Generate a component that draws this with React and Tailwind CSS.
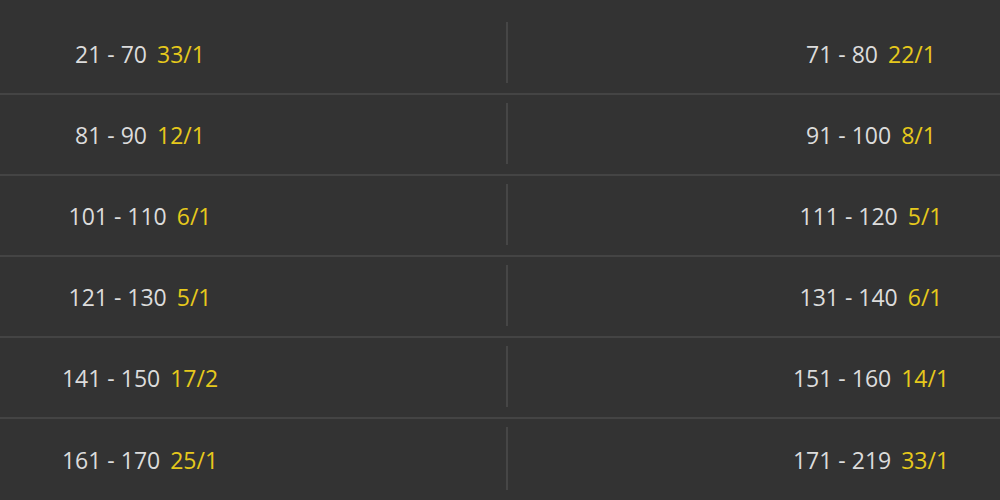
import React from 'react';

const rows = [
  [{ range: '21 - 70', odds: '33/1' }, { range: '71 - 80', odds: '22/1' }],
  [{ range: '81 - 90', odds: '12/1' }, { range: '91 - 100', odds: '8/1' }],
  [{ range: '101 - 110', odds: '6/1' }, { range: '111 - 120', odds: '5/1' }],
  [{ range: '121 - 130', odds: '5/1' }, { range: '131 - 140', odds: '6/1' }],
  [{ range: '141 - 150', odds: '17/2' }, { range: '151 - 160', odds: '14/1' }],
  [{ range: '161 - 170', odds: '25/1' }, { range: '171 - 219', odds: '33/1' }],
];

const Cell = ({ range, odds, className }) => (
  <div className={`flex items-center justify-center gap-[10px] pt-[2px] ${className}`}>
    <span className="text-[#dcdcdc]">{range}</span>
    <span className="text-[#e6c91c]">{odds}</span>
  </div>
);

export default function App() {
  return (
    <div
      className="w-[1000px] h-[500px] overflow-hidden bg-[#333333] pt-[14px] text-[23px] leading-none"
      style={{ fontFamily: '"Open Sans", "Liberation Sans", sans-serif' }}
    >
      {rows.map((row, i) => (
        <div
          key={i}
          className={`flex h-[81px] ${i < rows.length - 1 ? 'border-b-2 border-[#444444]' : ''}`}
        >
          <Cell {...row[0]} className="w-[506px] pr-[226px]" />
          <div className="w-[2px] my-[8px] mb-[10px] bg-[#464646]" />
          <Cell {...row[1]} className="flex-1 pl-[234px]" />
        </div>
      ))}
    </div>
  );
}
